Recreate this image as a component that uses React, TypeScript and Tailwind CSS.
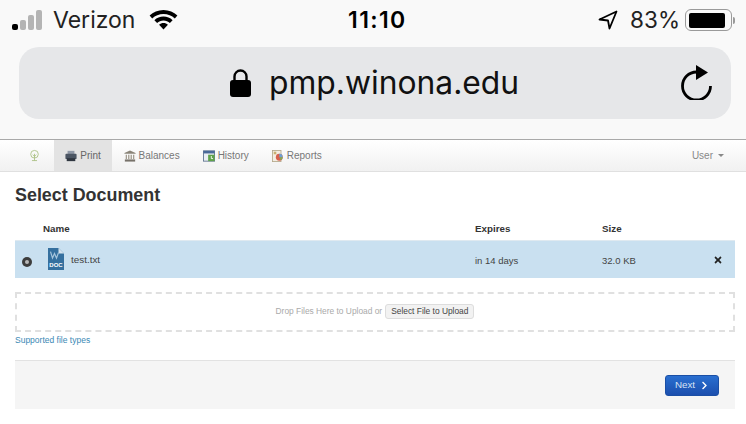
import React from 'react';
import { FaChevronRight, FaTimes } from 'react-icons/fa';

const sans = 'font-["Liberation_Sans",Arial,sans-serif]';

const SignalBars = () => (
  <div className="flex items-end gap-[2px] w-[34px]">
    <div className="w-[6px] h-[6px] rounded-[2px] bg-black" />
    <div className="w-[6px] h-[10px] rounded-[2px] bg-[#b4b4b4]" />
    <div className="w-[6px] h-[15px] rounded-[2px] bg-[#b4b4b4]" />
    <div className="w-[6px] h-[20px] rounded-[2px] bg-[#b4b4b4]" />
  </div>
);

const WifiIcon = () => (
  <svg width="29" height="20" viewBox="0 0 29 20">
    <path d="M14.5 0C9 0 4.2 2.2.6 5.6l2.6 2.8C6.1 5.600 10.100 3.900 14.500 3.900s8.400 1.700 11.300 4.500l2.600-2.800C24.800 2.200 20 0 14.500 0z" fill="#000" />
    <path d="M14.500 6.600c-3.500 0-6.700 1.400-9.100 3.600l2.700 2.800c1.700-1.500 3.900-2.500 6.400-2.500s4.700 1 6.400 2.500l2.700-2.800c-2.400-2.200-5.600-3.600-9.100-3.600z" fill="#000" />
    <path d="M14.500 13c-1.700 0-3.200.6-4.400 1.700l4.400 4.800 4.400-4.800c-1.200-1.100-2.700-1.700-4.400-1.700z" fill="#000" />
  </svg>
);

const LocationIcon = () => (
  <svg width="20" height="20" viewBox="0 0 20 20" fill="none" stroke="#000" strokeWidth="1.8" strokeLinejoin="round">
    <path d="M18.500 1.500 1.500 9.500 10 10.500 11.500 18.500z" />
  </svg>
);

const Battery = () => (
  <div className="flex items-center">
    <div className="w-[47px] h-[22px] rounded-[6px] border-[1.5px] border-[#9a9a9a] p-[2.500px]">
      <div className="w-[36px] h-full rounded-[2px] bg-black" />
    </div>
    <div className="ml-[1px] w-[2px] h-[7px] rounded-r-[2px] bg-[#9a9a9a]" />
  </div>
);

const LockIcon = () => (
  <svg width="21" height="28" viewBox="0 0 21 28">
    <path d="M4.500 12V7.500a6 6 0 0 1 12 0V12" fill="none" stroke="#000" strokeWidth="2.400" />
    <rect x="0" y="11" width="21" height="17" rx="3" fill="#000" />
  </svg>
);

const ReloadIcon = () => (
  <svg width="31" height="35" viewBox="0 0 31 35" fill="none">
    <path d="M15.500 7A14 14 0 1 0 29.500 21" stroke="#000" strokeWidth="2.800" />
    <path d="M15 0 27 7.500 15 15z" fill="#000" />
  </svg>
);

const TreeIcon = () => (
  <svg width="11" height="13" viewBox="0 0 13 14" fill="none" stroke="#a9bf80" strokeWidth="1">
    <circle cx="6.500" cy="5.500" r="4.500" />
    <path d="M6.500 5v8M3.500 13h6M6.500 8 4.500 6M6.500 8l2-2" />
  </svg>
);

const PrinterIcon = () => (
  <svg width="12" height="12" viewBox="0 0 14 13">
    <rect x="3" y="0.500" width="8" height="4" fill="#8f98a6" />
    <rect x="0.500" y="4" width="13" height="6" rx="1" fill="#4b5563" />
    <rect x="2" y="9" width="10" height="3.500" fill="#2f3640" />
  </svg>
);

const BankIcon = () => (
  <svg width="12" height="12" viewBox="0 0 14 14">
    <path d="M7 .5 13.500 3.500v1H.5v-1z" fill="#8a8478" />
    <path d="M2 5.500h1.500v5H2zM4.800 5.500h1.500v5H4.800zM7.700 5.500h1.500v5H7.700zM10.500 5.500H12v5h-1.500z" fill="#a39d90" />
    <rect x="1" y="11" width="12" height="2.500" fill="#77726a" />
  </svg>
);

const CalendarIcon = () => (
  <svg width="12" height="12" viewBox="0 0 14 13">
    <rect x="0.500" y="0.500" width="13" height="12" fill="#e9eef3" stroke="#5a6f8c" />
    <rect x="0.500" y="0.500" width="13" height="3" fill="#4a6a99" />
    <rect x="6" y="5" width="7.500" height="7.500" fill="#5fa24a" />
    <path d="M9.700 6.500v3h2" stroke="#fff" fill="none" />
  </svg>
);

const ReportIcon = () => (
  <svg width="12" height="12" viewBox="0 0 14 14">
    <rect x="0.500" y="0.500" width="10" height="13" fill="#f3eee2" stroke="#b5a98c" />
    <rect x="2" y="2" width="3" height="3" fill="#c9b071" />
    <circle cx="8.500" cy="8.500" r="4" fill="#d8614d" />
    <path d="M8.500 8.500V4.500a4 4 0 0 1 4 4z" fill="#6f9fd0" />
    <path d="M8.500 8.500h4a4 4 0 0 1-2 3.400z" fill="#7fae57" />
  </svg>
);

const DocIcon = () => (
  <svg width="16" height="22" viewBox="0 0 16 24" preserveAspectRatio="none">
    <path d="M0 0h10.500L16 6v18H0z" fill="#35709f" />
    <path d="M10.500 0 16 6h-5.500z" fill="#d5e3ee" />
    <path d="M2.500 4 4.500 11 6.500 6 8.500 11 10.500 5" fill="none" stroke="#a5c5dc" strokeWidth="1.200" />
    <text x="8" y="20.500" textAnchor="middle" fontSize="6" fontWeight="700" fill="#fff" fontFamily="Liberation Sans">DOC</text>
  </svg>
);

const navItems = [
  { label: 'Print', icon: <PrinterIcon />, active: true },
  { label: 'Balances', icon: <BankIcon /> },
  { label: 'History', icon: <CalendarIcon /> },
  { label: 'Reports', icon: <ReportIcon /> },
];

export default function App() {
  return (
    <div className={`w-[746px] h-[424px] overflow-hidden bg-white ${sans}`}>
      {/* Barra de iOS y Safari */}
      <div className="h-[139px] bg-[#f9f9f9] font-['Inter',sans-serif] text-black">
        <div className="h-[40px] pl-[12px] pr-[11px] flex items-center justify-between relative">
          <div className="flex items-center">
            <SignalBars />
            <span className="ml-[7px] text-[23px] leading-none text-[#222]">Verizon</span>
            <span className="ml-[14px] flex"><WifiIcon /></span>
          </div>
          <span className="absolute left-[348px] top-[8px] text-[23px] leading-[24px] font-semibold tracking-[1.4px]">11:10</span>
          <div className="flex items-center">
            <LocationIcon />
            <span className="ml-[12px] mr-[5px] text-[22.500px] leading-none text-[#222]">83%</span>
            <Battery />
          </div>
        </div>
        <div className="ml-[19px] mr-[15px] mt-[7px] h-[72px] rounded-[20px] bg-[#e6e7e9] flex items-center relative pl-[211px]">
          <LockIcon />
          <span className="ml-[18px] text-[31.800px] leading-none text-[#111]">pmp.winona.edu</span>
          <span className="absolute right-[19px] top-[18px] flex"><ReloadIcon /></span>
        </div>
      </div>

      {/* Navegación */}
      <div className="h-[33px] border-t border-[#a9a9a9] border-b border-b-[#e0e0e0] bg-gradient-to-b from-white to-[#f1f1f1] flex items-stretch pl-[15px] pr-[22px] text-[10px] text-[#777]">
        <div className="w-[39px] flex items-center justify-center"><TreeIcon /></div>
        {navItems.map(item => (
          <div
            key={item.label}
            className={`flex items-center gap-[3px] ${item.active ? 'w-[58px] justify-center bg-[#e3e3e3] text-[#666]' : 'px-[11.500px]'}`}
          >
            {item.icon}
            <span>{item.label}</span>
          </div>
        ))}
        <div className="ml-auto flex items-center text-[#888]">
          User
          <span className="ml-[5px] border-x-[3px] border-x-transparent border-t-[3px] border-t-[#888]" />
        </div>
      </div>

      <div className="pl-[15px] pr-[11px]">
        <h1 className="mt-[13px] text-[17.900px] leading-[20px] font-bold text-[#333]">Select Document</h1>

        {/* Tabla de documentos */}
        <div className="mt-[14px] h-[21px] flex items-center text-[9.800px] font-bold text-[#333]">
          <span className="ml-[28px] w-[432px]">Name</span>
          <span className="w-[127px]">Expires</span>
          <span>Size</span>
        </div>
        <div className="h-[38px] bg-[#c9e0f0] border-t border-[#dfe9f0] flex items-center text-[9.500px] text-[#444]">
          <div className="w-[23px] flex justify-center pt-[4px]">
            <div className="w-[10px] h-[10px] rounded-full bg-[#3d3d3d] flex items-center justify-center">
              <div className="w-[4px] h-[4px] rounded-full bg-[#b9b9b9]" />
            </div>
          </div>
          <div className="ml-[10px] flex mb-[1px]"><DocIcon /></div>
          <span className="ml-[7px] w-[404px] text-[9.900px] pt-[1px]">test.txt</span>
          <span className="w-[127px] pt-[3px]">in 14 days</span>
          <span className="w-[111px] pt-[3px]">32.0 KB</span>
          <FaTimes className="text-[10px] text-[#222]" />
        </div>

        {/* Zona de carga */}
        <div className="mt-[14px] h-[40px] border-2 border-dashed border-[#e0e0e0] flex items-center justify-center text-[8.400px] text-[#aaa] pb-[1px]">
          <span>Drop Files Here to Upload or</span>
          <span className="ml-[3px] h-[15px] px-[5px] flex items-center rounded-[3px] border border-[#ddd] bg-[#f2f2f2] text-[#444] text-[8.400px]">Select File to Upload</span>
        </div>
        <div className="mt-[2px] text-[8.500px] leading-[12px] text-[#3b89b5]">Supported file types</div>

        {/* Pie */}
        <div className="mt-[14px] h-[49px] border-t border-[#e2e2e2] bg-[#f5f5f5] flex items-center justify-end pr-[16px]">
          <div className="w-[54px] h-[21px] rounded-[3px] border border-[#1b4fa5] bg-gradient-to-b from-[#2a6fd0] to-[#1c4fae] flex items-center justify-center gap-[5px] text-[9.800px] text-[#d7e3f5]">
            Next
            <FaChevronRight className="text-[9px] text-white" />
          </div>
        </div>
      </div>
    </div>
  );
}
